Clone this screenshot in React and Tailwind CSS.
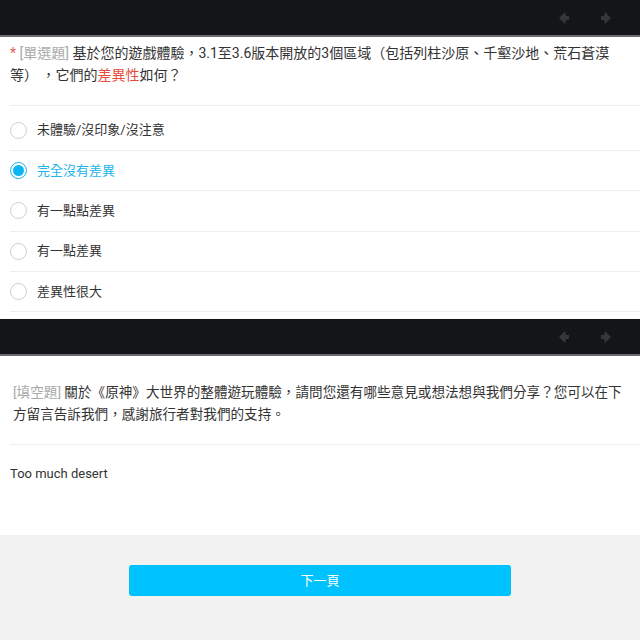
import React from "react";

const font = { fontFamily: '"Roboto", "Noto Sans CJK TC", sans-serif' };

const NavBar = () => (
    <div className="h-[37px] bg-[#141518] border-b-2 border-[#6b6b6e] flex items-center justify-end pr-[26px] gap-[22px]">
        <svg width="18" height="18" viewBox="0 0 18 18">
            <path d="M9 3 L3 9 L9 15 L10 11 L13 11 L13 7 L10 7 Z" fill="#35363a" />
        </svg>
        <svg width="18" height="18" viewBox="0 0 18 18">
            <path d="M9 3 L15 9 L9 15 L8 11 L5 11 L5 7 L8 7 Z" fill="#35363a" />
        </svg>
    </div>
);

const options = [
    "未體驗/沒印象/沒注意",
    "完全沒有差異",
    "有一點點差異",
    "有一點差異",
    "差異性很大",
];

export default function App() {
    const [selected, setSelected] = React.useState(1);

    return (
        <div className="w-[640px] h-[640px] bg-[#f2f2f3] overflow-hidden" style={font}>
            <NavBar />
            <div className="bg-white pl-[10px]">
                <div className="pt-[5px] pb-[19px] pr-[30px] text-[14px] leading-[22px] text-[#333]">
                    <span className="text-[#e95b5b]">* </span>
                    <span className="text-[#aaa]">[單選題]</span> 基於您的遊戲體驗，3.1至3.6版本開放的3個區域（包括列柱沙原、千壑沙地、荒石蒼漠等）&nbsp;，它們的
                    <span className="text-[#e54c3c]">差異性</span>如何？
                </div>
                {options.map((opt, i) => (
                    <div
                        key={opt}
                        onClick={() => setSelected(i)}
                        className={
                            "border-t border-[#eeeeee] flex items-center gap-[10px] cursor-pointer " +
                            (i === 0 ? "h-[45px] pt-[4px]" : "h-[40.3px]")
                        }
                    >
                        {selected === i ? (
                            <span className="w-[17px] h-[17px] rounded-full border-[1.5px] border-[#17b3ea] flex items-center justify-center">
                                <span className="w-[11px] h-[11px] rounded-full bg-[#0cb6f2]" />
                            </span>
                        ) : (
                            <span className="w-[17px] h-[17px] rounded-full border border-[#cfcfcf]" />
                        )}
                        <span className={"text-[13px] " + (selected === i ? "text-[#20b4e8]" : "text-[#333]")}>
                            {opt}
                        </span>
                    </div>
                ))}
                <div className="h-[8px] border-t border-[#eeeeee]" />
            </div>
            <NavBar />
            <div className="bg-white pl-[10px]">
                <div className="pt-[25px] pb-[19px] pl-[3px] pr-[8px] text-[13.6px] leading-[22px] text-[#333]">
                    <span className="text-[#aaa]">[填空題]</span> 關於《原神》大世界的整體遊玩體驗，請問您還有哪些意見或想法想與我們分享？您可以在下方留言告訴我們，感謝旅行者對我們的支持。
                </div>
                <div className="h-[91px] border-t border-[#eeeeee] pt-[19px] text-[13px] text-[#333]">
                    Too much desert
                </div>
            </div>
            <div className="pt-[30px] flex justify-center">
                <button className="w-[382px] h-[31px] rounded-[3px] bg-[#00c2ff] text-white text-[13px]">
                    下一頁
                </button>
            </div>
        </div>
    );
}
